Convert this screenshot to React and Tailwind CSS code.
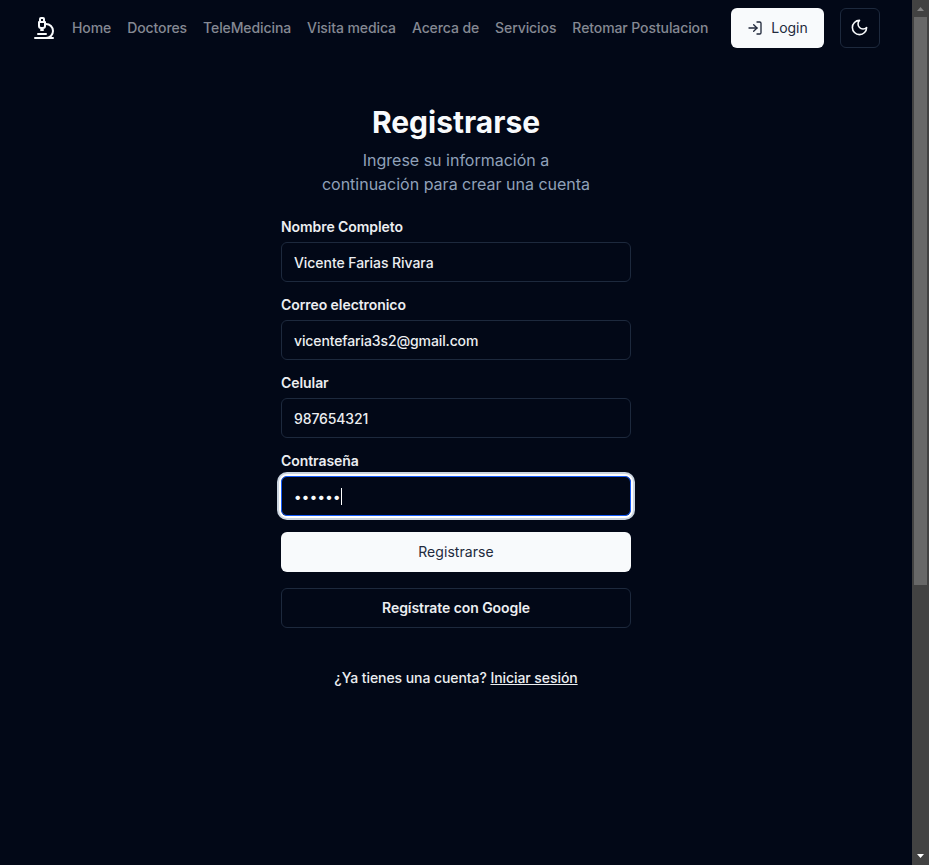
import React from "react";
import { Microscope, LogIn } from "lucide-react";

const links = ["Home", "Doctores", "TeleMedicina", "Visita medica", "Acerca de", "Servicios", "Retomar Postulacion"];

const fields = [
  { label: "Nombre Completo", value: "Vicente Farias Rivara", tracking: "tracking-[-0.06px]" },
  { label: "Correo electronico", value: "vicentefaria3s2@gmail.com", tracking: "tracking-[-0.12px]" },
  { label: "Celular", value: "987654321", tracking: "tracking-[-0.12px]" },
];

function Field({ label, children }) {
  return (
    <div className="grid gap-2">
      <div className="text-sm leading-[14px] font-semibold tracking-[-0.07px] text-[#eceef1]">{label}</div>
      {children}
    </div>
  );
}

function MoonIcon() {
  return (
    <svg width="19" height="19" viewBox="0 0 24 24" fill="none" stroke="currentColor" strokeWidth="2" strokeLinecap="round" strokeLinejoin="round" className="mr-px mb-px">
      <path d="M12 3a6 6 0 0 0 9 9 9 9 0 1 1-9-9Z" />
    </svg>
  );
}

function Scrollbar() {
  return (
    <div className="flex w-[17px] shrink-0 flex-col items-center bg-[#424242]">
      <svg width="17" height="17" viewBox="0 0 17 17"><path d="M5 11h7L8.500 7z" fill="#868686" /></svg>
      <div className="h-[568px] w-[13px] bg-[#686868]" />
      <div className="flex-1" />
      <svg width="17" height="17" viewBox="0 0 17 17"><path d="M5 6h7L8.500 10z" fill="#fff" /></svg>
    </div>
  );
}

export default function App() {
  return (
    <div className="flex h-[865px] w-[929px] overflow-hidden bg-[#020817] font-['Inter',sans-serif] text-slate-50">
      <div className="flex flex-1 flex-col">
        <header className="flex h-14 items-center pl-8">
          <Microscope size={24} className="mr-4 shrink-0" />
          <nav className="flex w-[636px] gap-4 text-sm font-medium tracking-[-0.095px] whitespace-nowrap text-[#858993]">
            {links.map((l) => <span key={l}>{l}</span>)}
          </nav>
          <button className="ml-[23px] flex h-10 w-[93px] shrink-0 items-center justify-center gap-2 rounded-md bg-slate-50 text-sm text-[#222a3d]">
            <LogIn size={16} />Login
          </button>
          <button className="ml-4 flex h-10 w-10 shrink-0 items-center justify-center rounded-md border border-slate-800">
            <MoonIcon />
          </button>
        </header>
        <main className="mx-auto mt-12 w-[350px]">
          <div className="grid gap-2 text-center">
            <h1 className="text-3xl leading-9 font-bold">Registrarse</h1>
            <p className="text-base leading-6 text-slate-400">Ingrese su información a<br />continuación para crear una cuenta</p>
          </div>
          <div className="mt-6 grid gap-4">
            {fields.map((f) => (
              <Field key={f.label} label={f.label}>
                <div className={`flex h-10 items-center rounded-md border border-slate-800 px-3 pt-0.5 text-sm font-medium text-[#eceef1] ${f.tracking}`}>{f.value}</div>
              </Field>
            ))}
            <Field label="Contraseña">
              <div className="flex h-10 items-center rounded-md border border-blue-600 px-3 shadow-[0_0_0_2px_#fff,0_0_0_4px_#cbd5e1]">
                <span className="w-[47px] pt-0.5 text-sm font-medium tracking-[0.36px]">••••••</span><span className="h-[17px] w-px bg-white" />
              </div>
            </Field>
            <button className="h-10 rounded-md bg-slate-50 text-sm tracking-[0.07px] text-[#222a3d]">Registrarse</button>
            <button className="h-10 rounded-md border border-slate-800 text-sm font-semibold tracking-[-0.07px] text-[#eceef1]">Regístrate con Google</button>
          </div>
          <p className="mt-10 text-center text-sm font-medium tracking-[-0.07px] text-[#eceef1]">¿Ya tienes una cuenta? <span className="underline">Iniciar sesión</span></p>
        </main>
      </div>
      <Scrollbar />
    </div>
  );
}
